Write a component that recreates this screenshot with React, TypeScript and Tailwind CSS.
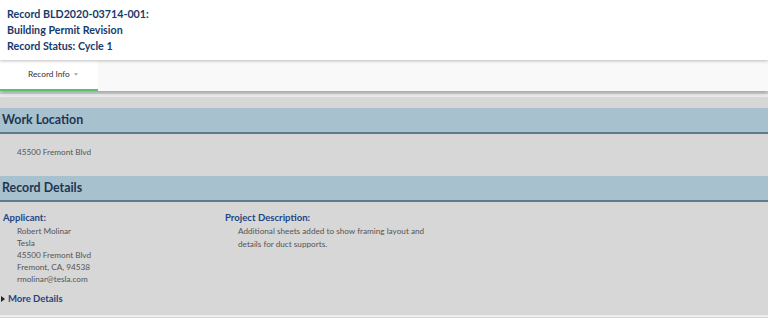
import { useState } from 'react'

const font = { fontFamily: 'Lato, "Open Sans", sans-serif' }

function SectionHeader({ title }: { title: string }) {
  return (
    <div className="h-[26px] flex items-center pl-[2px] bg-[#a8c1ce] border-b-2 border-[#5d7d8d]">
      <span className="text-[12.4px] font-bold text-[#1e3550] leading-none">{title}</span>
    </div>
  )
}

export default function App() {
  const [open, setOpen] = useState(false)

  return (
    <div style={font} className="w-[768px] h-[318px] overflow-hidden bg-[#d7d7d7] flex flex-col">
      <div className="h-[60px] bg-white px-[7px] pt-[6px] relative z-20 shadow-[0_1px_3px_rgba(0,0,0,0.25)]">
        <div className="text-[10.7px] leading-[16px] font-bold text-[#173a6c]">
          <div>Record BLD2020-03714-001:</div>
          <div>Building Permit Revision</div>
          <div>Record Status: Cycle 1</div>
        </div>
      </div>

      <div className="h-[31px] bg-[#f9f9f9] flex relative z-10 shadow-[0_2px_4px_rgba(0,0,0,0.25)]">
        <button className="w-[98px] h-full bg-white border-b-2 border-[#52c36f] flex items-center pl-[28px] gap-[4px] text-[8.3px] text-[#333]">
          Record Info
          <span className="w-0 h-0 border-l-[2.5px] border-r-[2.5px] border-t-[3px] border-l-transparent border-r-transparent border-t-[#9fb3c4]" />
        </button>
      </div>

      <div className="h-[3px] mt-[3px] bg-[#ececec]" />
      <div className="h-[11px]" />

      <SectionHeader title="Work Location" />
      <div className="h-[42px] pl-[17px] pt-[12px] text-[8.2px] text-[#555]">45500 Fremont Blvd</div>

      <SectionHeader title="Record Details" />
      <div className="flex pt-[9px]">
        <div className="w-[221px] pl-[3px]">
          <div className="text-[9.5px] font-bold text-[#1b4583] leading-[14px]">Applicant:</div>
          <div className="pl-[14px] text-[8.2px] leading-[12px] text-[#555]">
            <div>Robert Molinar</div>
            <div>Tesla</div>
            <div>45500 Fremont Blvd</div>
            <div>Fremont, CA, 94538</div>
            <div>rmolinar@tesla.com</div>
          </div>
        </div>
        <div className="pl-[4px]">
          <div className="text-[9.6px] font-bold text-[#1b4583] leading-[14px]">Project Description:</div>
          <div className="pl-[13px] w-[210px] text-[8.2px] leading-[12.5px] text-[#555]">
            Additional sheets added to show framing layout and details for duct supports.
          </div>
        </div>
      </div>
      <button
        onClick={() => setOpen(!open)}
        className="mt-[7px] pl-[1px] flex items-center gap-[3px] text-[9.5px] font-bold text-[#1b4583]"
      >
        <span className="w-0 h-0 border-t-[3px] border-b-[3px] border-l-[4px] border-t-transparent border-b-transparent border-l-[#222]" />
        More Details
      </button>
      <div className="flex-1" />
      <div className="h-[2px] bg-[#eeeeee] mb-[1px]" />
    </div>
  )
}
